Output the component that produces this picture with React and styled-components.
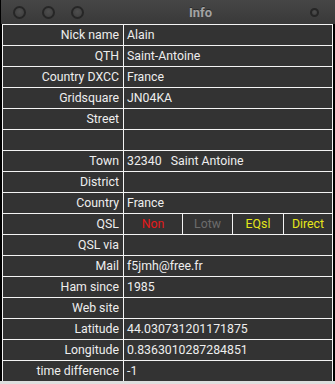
import React from "react";
import styled, { createGlobalStyle } from "styled-components";

const Global = createGlobalStyle`
  html, body { margin: 0; padding: 0; background: #000; }
  body { font-family: Roboto, "DejaVu Sans", sans-serif; }
`;

const Window = styled.div`
  width: 335px;
  height: 384px;
  background: #000;
  display: flex;
  flex-direction: column;
  overflow: hidden;
`;

const TitleBar = styled.div`
  height: 24px;
  flex: none;
  display: flex;
  align-items: center;
  padding: 0 16px 0 12px;
  background: linear-gradient(#464646, #393939);
  border-left: 1px solid #000;
  box-sizing: border-box;
`;

const Buttons = styled.div`
  display: flex;
  gap: 16px;
  width: 78px;
`;

const Circle = styled.span`
  display: block;
  box-sizing: border-box;
  width: ${(p) => p.$size}px;
  height: ${(p) => p.$size}px;
  border-radius: 50%;
  border: 2px solid #262626;
  background: radial-gradient(circle at 50% 40%, #4e4e4e, #3c3c3c);
`;

const Title = styled.div`
  flex: 1;
  text-align: center;
  font-family: Roboto, "DejaVu Sans", sans-serif;
  font-weight: 700;
  font-size: 13px;
  color: #a3a3a3;
  text-shadow: 0 -1px 0 #2a2a2a;
`;

const Body = styled.div`
  flex: 1;
  padding: 0 2px;
  display: flex;
  flex-direction: column;
`;

const Grid = styled.div`
  display: grid;
  grid-template-columns: 120px 1fr;
  grid-auto-rows: 20px;
  gap: 1px;
  background: #f4f4f4;
  padding: 1px 1px 0 1px;
`;

const Cell = styled.div`
  background: #333333;
  color: #eeeeee;
  font-family: Roboto, "DejaVu Sans", sans-serif;
  font-size: 12.3px;
  line-height: 20px;
  white-space: pre;
  overflow: hidden;
  padding: ${(p) => (p.$label ? "0 4px 0 0" : "0 0 0 3px")};
  text-align: ${(p) => (p.$label ? "right" : "left")};
`;

const QslGroup = styled.div`
  display: grid;
  grid-template-columns: 58px 49px 50px 1fr;
  gap: 1px;
  background: #f4f4f4;
`;

const QslCell = styled.div`
  background: #333333;
  color: ${(p) => p.$color};
  font-family: Roboto, "DejaVu Sans", sans-serif;
  font-size: 12.3px;
  line-height: 20px;
  text-align: center;
`;

const BottomStrip = styled.div`
  flex: 1;
  background: #dedede;
  margin: 0 -2px;
`;

const rows = [
  ["Nick name", "Alain"],
  ["QTH", "Saint-Antoine"],
  ["Country DXCC", "France"],
  ["Gridsquare", "JN04KA"],
  ["Street", ""],
  ["", ""],
  ["Town", "32340   Saint Antoine"],
  ["District", ""],
  ["Country", "France"],
  ["QSL", null],
  ["QSL via", ""],
  ["Mail", "f5jmh@free.fr"],
  ["Ham since", "1985"],
  ["Web site", ""],
  ["Latitude", "44.030731201171875"],
  ["Longitude", "0.8363010287284851"],
  ["time difference", "-1"],
];

const qsl = [
  ["Non", "#e41a1a"],
  ["Lotw", "#6c6c6c"],
  ["EQsl", "#e6e61a"],
  ["Direct", "#e6e61a"],
];

export default function App() {
  return (
    <>
      <Global />
      <Window>
        <TitleBar>
          <Buttons>
            <Circle $size={13} />
            <Circle $size={13} />
            <Circle $size={13} />
          </Buttons>
          <Title>Info</Title>
          <Circle $size={9} />
        </TitleBar>
        <Body>
          <Grid>
            {rows.map(([label, value], i) => (
              <React.Fragment key={i}>
                <Cell $label>{label}</Cell>
                {value === null ? (
                  <QslGroup>
                    {qsl.map(([t, c]) => (
                      <QslCell key={t} $color={c}>
                        {t}
                      </QslCell>
                    ))}
                  </QslGroup>
                ) : (
                  <Cell>{value}</Cell>
                )}
              </React.Fragment>
            ))}
          </Grid>
          <BottomStrip />
        </Body>
      </Window>
    </>
  );
}
